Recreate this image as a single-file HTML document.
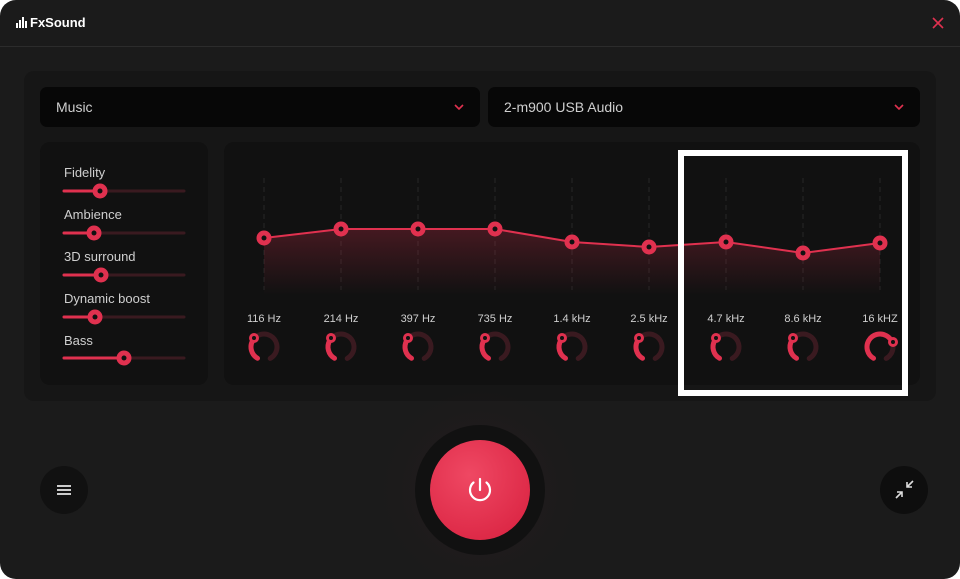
<!DOCTYPE html>
<html><head><style>
*{margin:0;padding:0;box-sizing:border-box}
body{width:960px;height:579px;background:#fff;font-family:"Liberation Sans",sans-serif;overflow:hidden;position:relative}
.win{position:absolute;left:0;top:0;width:960px;height:579px;background:#1b1b1b;border-radius:16px;overflow:hidden}
.abs{position:absolute}
.dd{position:absolute;top:87px;height:40px;background:#070707;border-radius:7px;color:#cfcfcf;font-size:14px;line-height:40px;padding-left:16px}
.lbl{position:absolute;left:64px;color:#cfcfcf;font-size:13px}
</style></head><body>
<div class="win">
 <svg class="abs" style="left:16px;top:17px" width="14" height="11"><rect x="0" y="6" width="2" height="5" fill="#fff"/><rect x="3" y="3" width="2" height="8" fill="#fff"/><rect x="6" y="0" width="2" height="11" fill="#fff"/><rect x="9" y="4" width="2" height="7" fill="#fff"/></svg>
 <div class="abs" style="left:30px;top:15px;color:#fff;font-size:13px;font-weight:bold">FxSound</div>
 <svg class="abs" style="left:932px;top:17px" width="12" height="12"><path d="M1 1L11 11M11 1L1 11" stroke="#e0314f" stroke-width="1.6"/></svg>
 <div class="abs" style="left:0;top:46px;width:960px;height:1px;background:#2c2c2c"></div>
 <div class="abs" style="left:24px;top:71px;width:912px;height:330px;background:#161616;border-radius:10px"></div>
 <div class="dd" style="left:40px;width:440px">Music<svg class="abs" style="right:16px;top:17px" width="10" height="6"><path d="M1 1L5 5L9 1" stroke="#e0314f" stroke-width="1.6" fill="none"/></svg></div>
 <div class="dd" style="left:488px;width:432px">2-m900 USB Audio<svg class="abs" style="right:16px;top:17px" width="10" height="6"><path d="M1 1L5 5L9 1" stroke="#e0314f" stroke-width="1.6" fill="none"/></svg></div>
 <div class="abs" style="left:40px;top:142px;width:168px;height:243px;background:#111;border-radius:10px"></div>
 <div class="abs" style="left:224px;top:142px;width:696px;height:243px;background:#111;border-radius:10px"></div>
 <div class="lbl" style="top:165px">Fidelity</div>
 <div class="lbl" style="top:207px">Ambience</div>
 <div class="lbl" style="top:249px">3D surround</div>
 <div class="lbl" style="top:291px">Dynamic boost</div>
 <div class="lbl" style="top:333px">Bass</div>
 <svg class="abs" style="left:0;top:0" width="960" height="579">
  <defs>
   <linearGradient id="fg" x1="0" y1="0" x2="0" y2="1"><stop offset="0" stop-color="#e0314f" stop-opacity=".25"/><stop offset="1" stop-color="#e0314f" stop-opacity="0"/></linearGradient>
   <radialGradient id="pg" cx=".5" cy=".5" r=".5"><stop offset="0" stop-color="#3a1a20" stop-opacity=".6"/><stop offset="1" stop-color="#1b1b1b" stop-opacity="0"/></radialGradient>
   <radialGradient id="bg" cx=".4" cy=".35" r=".7"><stop offset="0" stop-color="#ef4863"/><stop offset="1" stop-color="#dc2745"/></radialGradient>
  </defs>
  <g stroke="#e0314f" stroke-width="3" stroke-linecap="round">
   <line x1="64" y1="191" x2="184" y2="191" stroke="#3a1a20"/><line x1="64" y1="191" x2="100" y2="191"/>
   <line x1="64" y1="233" x2="184" y2="233" stroke="#3a1a20"/><line x1="64" y1="233" x2="94" y2="233"/>
   <line x1="64" y1="275" x2="184" y2="275" stroke="#3a1a20"/><line x1="64" y1="275" x2="101" y2="275"/>
   <line x1="64" y1="317" x2="184" y2="317" stroke="#3a1a20"/><line x1="64" y1="317" x2="95" y2="317"/>
   <line x1="64" y1="358" x2="184" y2="358" stroke="#3a1a20"/><line x1="64" y1="358" x2="124" y2="358"/>
  </g>
  <g fill="#e0314f"><circle cx="100" cy="191" r="7.5"/><circle cx="94" cy="233" r="7.5"/><circle cx="101" cy="275" r="7.5"/><circle cx="95" cy="317" r="7.5"/><circle cx="124" cy="358" r="7.5"/></g>
  <g fill="#111"><circle cx="100" cy="191" r="2.5"/><circle cx="94" cy="233" r="2.5"/><circle cx="101" cy="275" r="2.5"/><circle cx="95" cy="317" r="2.5"/><circle cx="124" cy="358" r="2.5"/></g>
  <g stroke="#262626" stroke-width="1" stroke-dasharray="5 4">
   <line x1="264" y1="178" x2="264" y2="290"/><line x1="341" y1="178" x2="341" y2="290"/><line x1="418" y1="178" x2="418" y2="290"/><line x1="495" y1="178" x2="495" y2="290"/><line x1="572" y1="178" x2="572" y2="290"/><line x1="649" y1="178" x2="649" y2="290"/><line x1="726" y1="178" x2="726" y2="290"/><line x1="803" y1="178" x2="803" y2="290"/><line x1="880" y1="178" x2="880" y2="290"/>
  </g>
  <path d="M264 238L341 229L418 229L495 229L572 242L649 247L726 242L803 253L880 243L880 295L264 295Z" fill="url(#fg)"/>
  <path d="M264 238L341 229L418 229L495 229L572 242L649 247L726 242L803 253L880 243" fill="none" stroke="#e0314f" stroke-width="2"/>
  <g fill="#e0314f"><circle cx="264" cy="238" r="7.5"/><circle cx="341" cy="229" r="7.5"/><circle cx="418" cy="229" r="7.5"/><circle cx="495" cy="229" r="7.5"/><circle cx="572" cy="242" r="7.5"/><circle cx="649" cy="247" r="7.5"/><circle cx="726" cy="242" r="7.5"/><circle cx="803" cy="253" r="7.5"/><circle cx="880" cy="243" r="7.5"/></g>
  <g fill="#111"><circle cx="264" cy="238" r="2.5"/><circle cx="341" cy="229" r="2.5"/><circle cx="418" cy="229" r="2.5"/><circle cx="495" cy="229" r="2.5"/><circle cx="572" cy="242" r="2.5"/><circle cx="649" cy="247" r="2.5"/><circle cx="726" cy="242" r="2.5"/><circle cx="803" cy="253" r="2.5"/><circle cx="880" cy="243" r="2.5"/></g>
  <g fill="#cfcfcf" font-size="11" text-anchor="middle" font-family="Liberation Sans">
   <text x="264" y="322">116 Hz</text><text x="341" y="322">214 Hz</text><text x="418" y="322">397 Hz</text><text x="495" y="322">735 Hz</text><text x="572" y="322">1.4 kHz</text><text x="649" y="322">2.5 kHz</text><text x="726" y="322">4.7 kHz</text><text x="803" y="322">8.6 kHz</text><text x="880" y="322">16 kHZ</text>
  </g>
  <g fill="none" stroke-width="5" stroke-linecap="round">
   <g stroke="#3a1a20" stroke-dasharray="68 100">
    <circle cx="264" cy="347" r="13" transform="rotate(120 264 347)"/><circle cx="341" cy="347" r="13" transform="rotate(120 341 347)"/><circle cx="418" cy="347" r="13" transform="rotate(120 418 347)"/><circle cx="495" cy="347" r="13" transform="rotate(120 495 347)"/><circle cx="572" cy="347" r="13" transform="rotate(120 572 347)"/><circle cx="649" cy="347" r="13" transform="rotate(120 649 347)"/><circle cx="726" cy="347" r="13" transform="rotate(120 726 347)"/><circle cx="803" cy="347" r="13" transform="rotate(120 803 347)"/><circle cx="880" cy="347" r="13" transform="rotate(120 880 347)"/>
   </g>
   <g stroke="#e0314f" stroke-dasharray="22.7 100">
    <circle cx="264" cy="347" r="13" transform="rotate(120 264 347)"/><circle cx="341" cy="347" r="13" transform="rotate(120 341 347)"/><circle cx="418" cy="347" r="13" transform="rotate(120 418 347)"/><circle cx="495" cy="347" r="13" transform="rotate(120 495 347)"/><circle cx="572" cy="347" r="13" transform="rotate(120 572 347)"/><circle cx="649" cy="347" r="13" transform="rotate(120 649 347)"/><circle cx="726" cy="347" r="13" transform="rotate(120 726 347)"/><circle cx="803" cy="347" r="13" transform="rotate(120 803 347)"/>
   </g>
   <circle cx="880" cy="347" r="13" transform="rotate(120 880 347)" stroke="#e0314f" stroke-dasharray="50 100"/>
  </g>
  <g fill="#e0314f"><circle cx="254" cy="338" r="5"/><circle cx="331" cy="338" r="5"/><circle cx="408" cy="338" r="5"/><circle cx="485" cy="338" r="5"/><circle cx="562" cy="338" r="5"/><circle cx="639" cy="338" r="5"/><circle cx="716" cy="338" r="5"/><circle cx="793" cy="338" r="5"/><circle cx="893" cy="342" r="5"/></g>
  <g fill="#111"><circle cx="254" cy="338" r="2"/><circle cx="331" cy="338" r="2"/><circle cx="408" cy="338" r="2"/><circle cx="485" cy="338" r="2"/><circle cx="562" cy="338" r="2"/><circle cx="639" cy="338" r="2"/><circle cx="716" cy="338" r="2"/><circle cx="793" cy="338" r="2"/><circle cx="893" cy="342" r="2"/></g>
  <rect x="681" y="153" width="224" height="240" fill="none" stroke="#fff" stroke-width="6"/>
  <circle cx="480" cy="490" r="110" fill="url(#pg)"/>
  <circle cx="480" cy="490" r="65" fill="#111"/>
  <circle cx="480" cy="490" r="50" fill="url(#bg)"/>
  <path d="M473.5 482.5A10 10 0 1 0 486.5 482.5" fill="none" stroke="#fff" stroke-width="2.2" stroke-linecap="round"/>
  <line x1="480" y1="479" x2="480" y2="490" stroke="#fff" stroke-width="2.2" stroke-linecap="round"/>
  <circle cx="64" cy="490" r="24" fill="#111"/>
  <g stroke="#ccc" stroke-width="2"><line x1="57" y1="486" x2="71" y2="486"/><line x1="57" y1="490" x2="71" y2="490"/><line x1="57" y1="494" x2="71" y2="494"/></g>
  <circle cx="904" cy="490" r="24" fill="#0e0e0e"/>
  <g stroke="#ddd" stroke-width="1.6" fill="none"><path d="M913 481L907 487M907 482V487H912"/><path d="M896 498L902 492M897 492H902V497"/></g>
 </svg>
</div>
</body></html>
